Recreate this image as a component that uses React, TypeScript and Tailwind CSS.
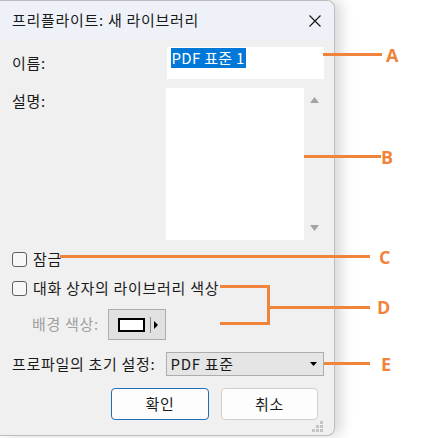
import React from "react";

const font = { fontFamily: '"Noto Sans CJK KR", "Noto Sans", sans-serif' };

function Checkbox() {
  return <span className="h-[15px] w-[15px] shrink-0 rounded-[3px] border border-[#5f5f5f] bg-[#f7f7f7]" />;
}

function Tri({ dir }: { dir: "up" | "down" }) {
  return (
    <svg width="9" height="6" viewBox="0 0 9 6">
      {dir === "up" ? <polygon points="4.5,0 9,6 0,6" fill="#a3a3a3" /> : <polygon points="0,0 9,0 4.5,6" fill="#a3a3a3" />}
    </svg>
  );
}

function Grip() {
  const dots = [
    [8, 0],
    [4, 4],
    [8, 4],
    [0, 8],
    [4, 8],
    [8, 8],
  ];
  return (
    <svg width="11" height="11" viewBox="0 0 11 11">
      {dots.map(([x, y], i) => (
        <rect key={i} x={x} y={y} width="3" height="3" fill="#c4c4c4" />
      ))}
    </svg>
  );
}

// orange annotation callouts sitting over the screenshot
function Callouts() {
  const line = "absolute bg-[#f0843a]";
  const letter = "absolute text-[18px] font-bold leading-none tracking-normal text-[#f0843a]";
  const lf = { fontFamily: '"Open Sans", "Liberation Sans", sans-serif' };
  return (
    <>
      <div className={`${line} left-[323px] top-[53px] h-[3px] w-[59px]`} />
      <span className={`${letter} left-[386px] top-[46px]`} style={lf}>A</span>
      <div className={`${line} left-[304px] top-[155px] h-[3px] w-[77px]`} />
      <span className={`${letter} left-[381px] top-[148px]`} style={lf}>B</span>
      <div className={`${line} left-[60px] top-[255px] h-[3px] w-[310px]`} />
      <span className={`${letter} left-[379px] top-[248px]`} style={lf}>C</span>
      <div className={`${line} left-[220px] top-[285px] h-[3px] w-[50px]`} />
      <div className={`${line} left-[220px] top-[322px] h-[3px] w-[50px]`} />
      <div className={`${line} left-[267px] top-[285px] h-[40px] w-[3px]`} />
      <div className={`${line} left-[267px] top-[306px] h-[3px] w-[103px]`} />
      <span className={`${letter} left-[377px] top-[298px]`} style={lf}>D</span>
      <div className={`${line} left-[324px] top-[362px] h-[3px] w-[46px]`} />
      <span className={`${letter} left-[381px] top-[355px]`} style={lf}>E</span>
    </>
  );
}

export default function App() {
  return (
    <div className="relative h-[438px] w-[445px] overflow-hidden bg-white text-[15px] tracking-[0.7px] text-[#1a1a1a]" style={font}>
      <div className="flex h-[436px] w-[335px] flex-col overflow-hidden rounded-r-[8px] border border-l-0 border-[#bdbdbd] bg-[#f0f0f0] shadow-[6px_0_14px_rgba(0,0,0,0.16)]">
        {/* title bar */}
        <div className="flex h-[39px] shrink-0 items-center justify-between bg-[#eef2f8] pl-[12px] pr-[13px]">
          <span className="text-[15px]">프리플라이트: 새 라이브러리</span>
          <svg width="12" height="12" viewBox="0 0 12 12" stroke="#1a1a1a" strokeWidth="1.2">
            <path d="M0.5 0.5 L11.5 11.5 M11.5 0.5 L0.5 11.5" />
          </svg>
        </div>

        <div className="flex flex-1 flex-col pl-[12px] pr-[10px]">
          {/* name */}
          <div className="mt-[7px] flex h-[32px] items-center">
            <span className="w-[155px]">이름:</span>
            <div className="flex h-full w-[158px] items-start bg-white pl-[4px] pt-[1px]">
              <span className="bg-[#0078d7] px-[1px] leading-[20px] tracking-[0.3px] text-white">PDF 표준 1</span>
            </div>
          </div>

          {/* description */}
          <div className="mt-[9px] flex h-[152px]">
            <span className="w-[155px] pt-[2px]">설명:</span>
            <div className="flex h-full w-[158px]">
              <div className="h-full w-[138px] bg-white" />
              <div className="flex h-full w-[20px] flex-col items-center justify-between pb-[9px] pt-[9px]">
                <Tri dir="up" />
                <Tri dir="down" />
              </div>
            </div>
          </div>

          {/* checkboxes */}
          <div className="mt-[9px] flex h-[20px] items-center gap-[6px]">
            <Checkbox />
            <span>잠금</span>
          </div>
          <div className="mt-[9px] flex h-[20px] items-center gap-[6px]">
            <Checkbox />
            <span>대화 상자의 라이브러리 색상</span>
          </div>

          {/* background colour */}
          <div className="mt-[11px] flex h-[31px] items-center">
            <span className="w-[96px] pl-[20px] text-[#a0a0a0]">배경 색상:</span>
            <div className="flex h-full w-[58px] items-center border border-[#adadad] bg-[#e1e1e1] pl-[9px]">
              <span className="h-[14px] w-[27px] border-2 border-black bg-white" />
              <span className="ml-[5px] h-[16px] w-px bg-[#8a8a8a]" />
              <svg className="ml-[3px]" width="4" height="8" viewBox="0 0 4 8">
                <polygon points="0,0 4,4 0,8" fill="#000" />
              </svg>
            </div>
          </div>

          {/* profile */}
          <div className="mt-[12px] flex h-[24px] items-center">
            <span className="w-[155px]">프로파일의 초기 설정:</span>
            <div className="flex h-full w-[158px] items-center justify-between border border-[#adadad] bg-[#e5e5e5] pl-[3px] pr-[6px]">
              <span>PDF 표준</span>
              <svg width="7" height="4" viewBox="0 0 7 4">
                <polygon points="0,0 7,0 3.5,4" fill="#000" />
              </svg>
            </div>
          </div>

          {/* buttons */}
          <div className="mt-[12px] flex h-[32px] items-center gap-[12px] pl-[99px]">
            <button className="h-full w-[98px] rounded-[4px] border border-[#1d6fb8] bg-[#fdfdfd]">확인</button>
            <button className="h-full w-[97px] rounded-[4px] border border-[#d0d0d0] bg-[#fdfdfd]">취소</button>
          </div>

          <div className="mt-auto flex justify-end pb-[3px] pr-[1px]">
            <Grip />
          </div>
        </div>
      </div>
      <Callouts />
    </div>
  );
}
